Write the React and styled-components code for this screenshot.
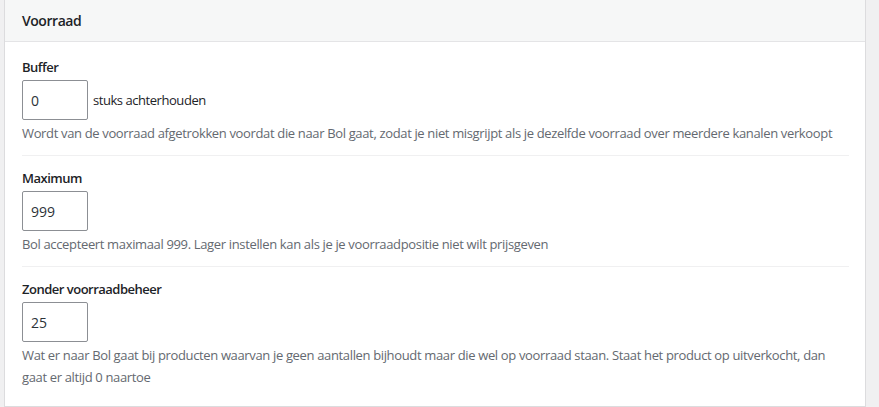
import React from "react";
import styled, { createGlobalStyle } from "styled-components";

const GlobalStyle = createGlobalStyle`
  html, body {
    margin: 0;
    padding: 0;
    background: #f0f0f1;
    font-family: "Open Sans", "Noto Sans", sans-serif;
    color: #1d2327;
  }
`;

const Page = styled.div`
  padding: 0 13px 0 4px;
  height: 407px;
  box-sizing: border-box;
  overflow: hidden;
`;

const Card = styled.div`
  background: #fff;
  border: 1px solid #dcdcde;
  border-top: none;
  min-height: 407px;
  box-sizing: border-box;
`;

const CardHeader = styled.div`
  height: 41px;
  display: flex;
  align-items: center;
  padding: 0 17px;
  background: #f6f7f7;
  border-bottom: 1px solid #e4e4e6;
`;

const Title = styled.h2`
  margin: 0;
  font-size: 14px;
  font-weight: 600;
  line-height: 1.4;
  letter-spacing: -0.45px;
`;

const Body = styled.div`
  padding: 3px 16px 0 17px;
`;

const Section = styled.div`
  padding: 12px 0 11px;
  & + & {
    border-top: 1px solid #f0f0f1;
  }
`;

const Label = styled.label`
  display: block;
  font-size: 13px;
  font-weight: 600;
  line-height: 20px;
  letter-spacing: -0.5px;
  margin-bottom: 3px;
`;

const InputRow = styled.div`
  display: flex;
  align-items: center;
  gap: 5px;
`;

const NumberInput = styled.input`
  width: 66px;
  height: 40px;
  box-sizing: border-box;
  border: 1px solid #8c8f94;
  border-radius: 2px;
  padding: 0 8px;
  font-family: inherit;
  font-size: 14px;
  color: #2c3338;
  background: #fff;
  outline: none;
`;

const Suffix = styled.span`
  font-size: 13px;
  letter-spacing: -0.45px;
  color: #1d2327;
`;

const Description = styled.p`
  margin: 2px 0 0;
  font-size: 13px;
  line-height: 22px;
  letter-spacing: -0.35px;
  color: #646970;
`;

const fields = [
  {
    label: "Buffer",
    value: "0",
    suffix: "stuks achterhouden",
    description:
      "Wordt van de voorraad afgetrokken voordat die naar Bol gaat, zodat je niet misgrijpt als je dezelfde voorraad over meerdere kanalen verkoopt",
  },
  {
    label: "Maximum",
    value: "999",
    description:
      "Bol accepteert maximaal 999. Lager instellen kan als je je voorraadpositie niet wilt prijsgeven",
  },
  {
    label: "Zonder voorraadbeheer",
    value: "25",
    description:
      "Wat er naar Bol gaat bij producten waarvan je geen aantallen bijhoudt maar die wel op voorraad staan. Staat het product op uitverkocht, dan gaat er altijd 0 naartoe",
  },
];

export default function App() {
  return (
    <>
      <GlobalStyle />
      <Page>
        <Card>
          <CardHeader>
            <Title>Voorraad</Title>
          </CardHeader>
          <Body>
            {fields.map((field) => (
              <Section key={field.label}>
                <Label>{field.label}</Label>
                <InputRow>
                  <NumberInput type="text" defaultValue={field.value} />
                  {field.suffix && <Suffix>{field.suffix}</Suffix>}
                </InputRow>
                <Description>{field.description}</Description>
              </Section>
            ))}
          </Body>
        </Card>
      </Page>
    </>
  );
}
